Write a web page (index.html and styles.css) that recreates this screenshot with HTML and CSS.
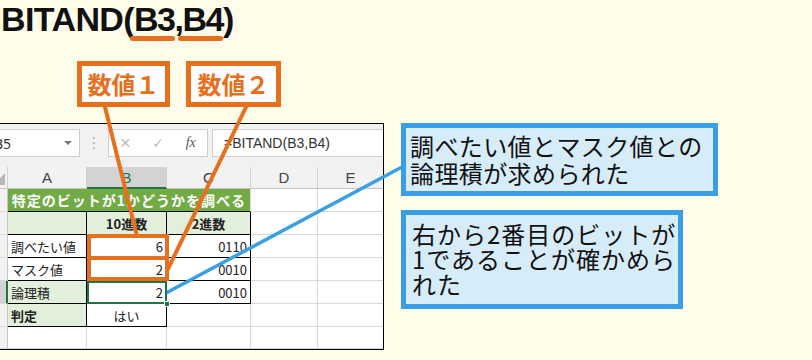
FILE: index.html
```html
<!DOCTYPE html>
<html lang="ja">
<head>
<meta charset="utf-8">
<title>BITAND</title>
<link rel="stylesheet" href="styles.css">
</head>
<body>
<div class="page">
  <h1 class="title">BITAND(<span class="tail"><span class="ul">B3</span>,<span class="ul">B4</span>)</span></h1>
  <div class="labels">
    <div class="label">数値１</div>
    <div class="label label2">数値２</div>
  </div>
  <div class="main">
    <div class="sheet">
      <div class="sheet-inner">
        <div class="fbar">
          <div class="namebox"><span>B5</span><span class="nb-arrow"></span></div>
          <span class="fsep">⋮</span>
          <div class="fbtns"><span class="fx-x">✕</span><span class="fx-ok">✓</span><span class="fx-f">fx</span></div>
          <div class="finput">=BITAND(B3,B4)</div>
        </div>
        <div class="grid">
          <div class="c ch corner"><span class="tri"></span></div>
          <div class="c ch">A</div>
          <div class="c ch sel">B</div>
          <div class="c ch">C</div>
          <div class="c ch">D</div>
          <div class="c ch">E</div>

          <div class="c rh">1</div>
          <div class="c g">特定のビットが1かどうかを調べる</div>
          <div class="c"></div>
          <div class="c"></div>

          <div class="c rh">2</div>
          <div class="c lg bk"></div>
          <div class="c lg bk b ctr">10進数</div>
          <div class="c lg bk b ctr">2進数</div>
          <div class="c"></div>
          <div class="c"></div>

          <div class="c rh">3</div>
          <div class="c bk">調べたい値</div>
          <div class="c bk r hl">6</div>
          <div class="c bk r">0110</div>
          <div class="c"></div>
          <div class="c"></div>

          <div class="c rh">4</div>
          <div class="c bk">マスク値</div>
          <div class="c bk r hl hl2">2</div>
          <div class="c bk r">0010</div>
          <div class="c"></div>
          <div class="c"></div>

          <div class="c rh rsel">5</div>
          <div class="c bk lg">論理積</div>
          <div class="c bk r sc">2</div>
          <div class="c bk r">0010</div>
          <div class="c"></div>
          <div class="c"></div>

          <div class="c rh">6</div>
          <div class="c bk lg b">判定</div>
          <div class="c bk ctr">はい</div>
          <div class="c"></div>
          <div class="c"></div>
          <div class="c"></div>

          <div class="c rh">7</div>
          <div class="c"></div>
          <div class="c"></div>
          <div class="c"></div>
          <div class="c"></div>
          <div class="c"></div>
        </div>
      </div>
    </div>
    <div class="callouts">
      <div class="callout c1">調べたい値とマスク値との<br>論理積が求められた</div>
      <div class="callout c2">右から2番目のビットが<br>1であることが確かめら<br>れた</div>
    </div>
  </div>
  <svg class="overlay" width="812" height="360" viewBox="0 0 812 360">
    <line x1="104.5" y1="105" x2="137" y2="236" stroke="#e6701e" stroke-width="4"/>
    <line x1="247" y1="105" x2="167" y2="271" stroke="#e6701e" stroke-width="4"/>
    <line x1="166" y1="293" x2="402" y2="167" stroke="#3b9fe3" stroke-width="3.5"/>
  </svg>
</div>
</body>
</html>
```
FILE: styles.css
```css
* { box-sizing: border-box; }
html, body { margin: 0; padding: 0; }
body {
  background: #fffde9;
  width: 812px;
  height: 360px;
  overflow: hidden;
  font-family: "Noto Sans CJK JP", "Noto Sans", sans-serif;
}
.page { position: relative; width: 812px; height: 360px; }

.title {
  margin: 0;
  height: 38px;
  padding-left: 1px;
  font: 700 34px/38px "Liberation Sans", Arial, sans-serif;
  letter-spacing: -0.6px;
  color: #111;
  white-space: nowrap;
}
.tail { letter-spacing: -1.5px; }
.ul { position: relative; }
.ul::after {
  content: "";
  position: absolute;
  left: -4px;
  right: 0;
  bottom: -3px;
  height: 5px;
  border-radius: 3px;
  background: #e4701e;
}

.labels { display: flex; gap: 16px; margin: 23px 0 0 77px; }
.label {
  width: 93px;
  height: 46px;
  border: 5px solid #e6701e;
  background: #fff;
  color: #e6701e;
  font: 700 24px/36px "Noto Sans CJK JP", sans-serif;
  text-align: center;
  white-space: nowrap;
}
.label2 { width: 95px; }

.main { display: flex; align-items: flex-start; margin-top: 16px; }

.sheet {
  width: 384px;
  flex: none;
  border: 1px solid #000;
  border-left: 0;
  background: #fff;
  overflow: hidden;
}
.sheet-inner { width: 414px; margin-left: -30px; }

.fbar {
  height: 43px;
  background: #f1f1f1;
  display: flex;
  align-items: flex-start;
  padding: 5px 0 0 2px;
}
.namebox {
  width: 108px;
  height: 28px;
  background: #fff;
  border: 1px solid #cfcfcf;
  display: flex;
  align-items: center;
  justify-content: space-between;
  padding: 0 7px 0 21px;
  font: 14px "Noto Sans", sans-serif;
  color: #333;
}
.nb-arrow {
  width: 0;
  height: 0;
  border-left: 4px solid transparent;
  border-right: 4px solid transparent;
  border-top: 4px solid #777;
}
.fsep {
  width: 28px;
  text-align: center;
  color: #b0b0b0;
  font: 15px/28px "DejaVu Sans", sans-serif;
}
.fbtns {
  width: 100px;
  height: 28px;
  background: #fff;
  border: 1px solid #cfcfcf;
  display: flex;
}
.fbtns span { width: 34px; text-align: center; }
.fx-x, .fx-ok { color: #bdbdbd; font: 14px/26px "DejaVu Sans", sans-serif; }
.fx-f { color: #555; font: italic 14px/26px "Liberation Serif", serif; }
.finput {
  flex: 1;
  height: 28px;
  margin-left: 4px;
  background: #fff;
  border: 1px solid #cfcfcf;
  border-right: 0;
  padding-left: 11px;
  font: 14px/26px "Liberation Sans", sans-serif;
  color: #333;
}

.grid {
  display: grid;
  grid-template-columns: 38px 79px 80px 84px 67px 66px;
  grid-template-rows: 22px repeat(6, 23px) 22px;
  font: 13px "Noto Sans CJK JP", sans-serif;
  color: #222;
}
.c {
  border-right: 1px solid #d9d9d9;
  border-bottom: 1px solid #d9d9d9;
  display: flex;
  align-items: center;
  padding: 0 3px;
  white-space: nowrap;
}
.ch {
  justify-content: center;
  background: #f2f2f2;
  border-right-color: #d0d0d0;
  border-bottom-color: #c4c4c4;
  color: #444;
  font: 15px "Liberation Sans", sans-serif;
}
.ch.sel {
  background: #d3d3d3;
  color: #217346;
  border-bottom: 2px solid #217346;
}
.corner { justify-content: flex-end; align-items: flex-end; padding: 0 2px 3px 0; }
.tri {
  width: 0;
  height: 0;
  border-left: 12px solid transparent;
  border-bottom: 12px solid #b8b8b8;
}
.rh {
  background: #f2f2f2;
  border-right-color: #c4c4c4;
  justify-content: center;
  color: #444;
}
.rh.rsel { background: #d3d3d3; border-right: 2px solid #217346; }

.g {
  grid-column: span 3;
  background: #72ab46;
  color: #fff;
  font-weight: 700;
  font-size: 14px;
  letter-spacing: 1px;
  justify-content: center;
  border-bottom-color: #000;
}
.lg { background: #e2efda; }
.bk { border-right-color: #000; border-bottom-color: #000; }
.r { justify-content: flex-end; }
.ctr { justify-content: center; }
.b { font-weight: 700; }

.hl { position: relative; z-index: 1; }
.hl::after {
  content: "";
  box-sizing: border-box;
  position: absolute;
  top: -1px;
  left: 0;
  right: -3px;
  bottom: -3px;
  border: 4px solid #e6701e;
}
.hl2::after { top: -2px; bottom: -1px; }

.sc { position: relative; z-index: 2; }
.sc::after {
  content: "";
  box-sizing: border-box;
  position: absolute;
  top: 0;
  left: 0;
  right: -1px;
  bottom: -1px;
  border: 2px solid #217346;
}
.sc::before {
  content: "";
  box-sizing: border-box;
  position: absolute;
  right: -4px;
  bottom: -4px;
  width: 6px;
  height: 6px;
  background: #217346;
  border: 1px solid #fff;
  z-index: 1;
}

.callouts {
  display: flex;
  flex-direction: column;
  align-items: flex-start;
  gap: 14px;
  margin-left: 17px;
}
.callout {
  border: 5px solid #3a9ee4;
  background: #d6ecf9;
  color: #111;
  font-family: "Noto Sans CJK JP", sans-serif;
  font-size: 24px;
  white-space: nowrap;
}
.c1 { width: 317px; height: 73px; padding: 4px 0 0 4px; line-height: 27px; letter-spacing: 0.4px; }
.c2 { width: 282px; height: 99px; padding: 6px 0 0 6px; line-height: 25px; letter-spacing: 1px; }

.overlay { position: absolute; left: 0; top: 0; pointer-events: none; }
```
